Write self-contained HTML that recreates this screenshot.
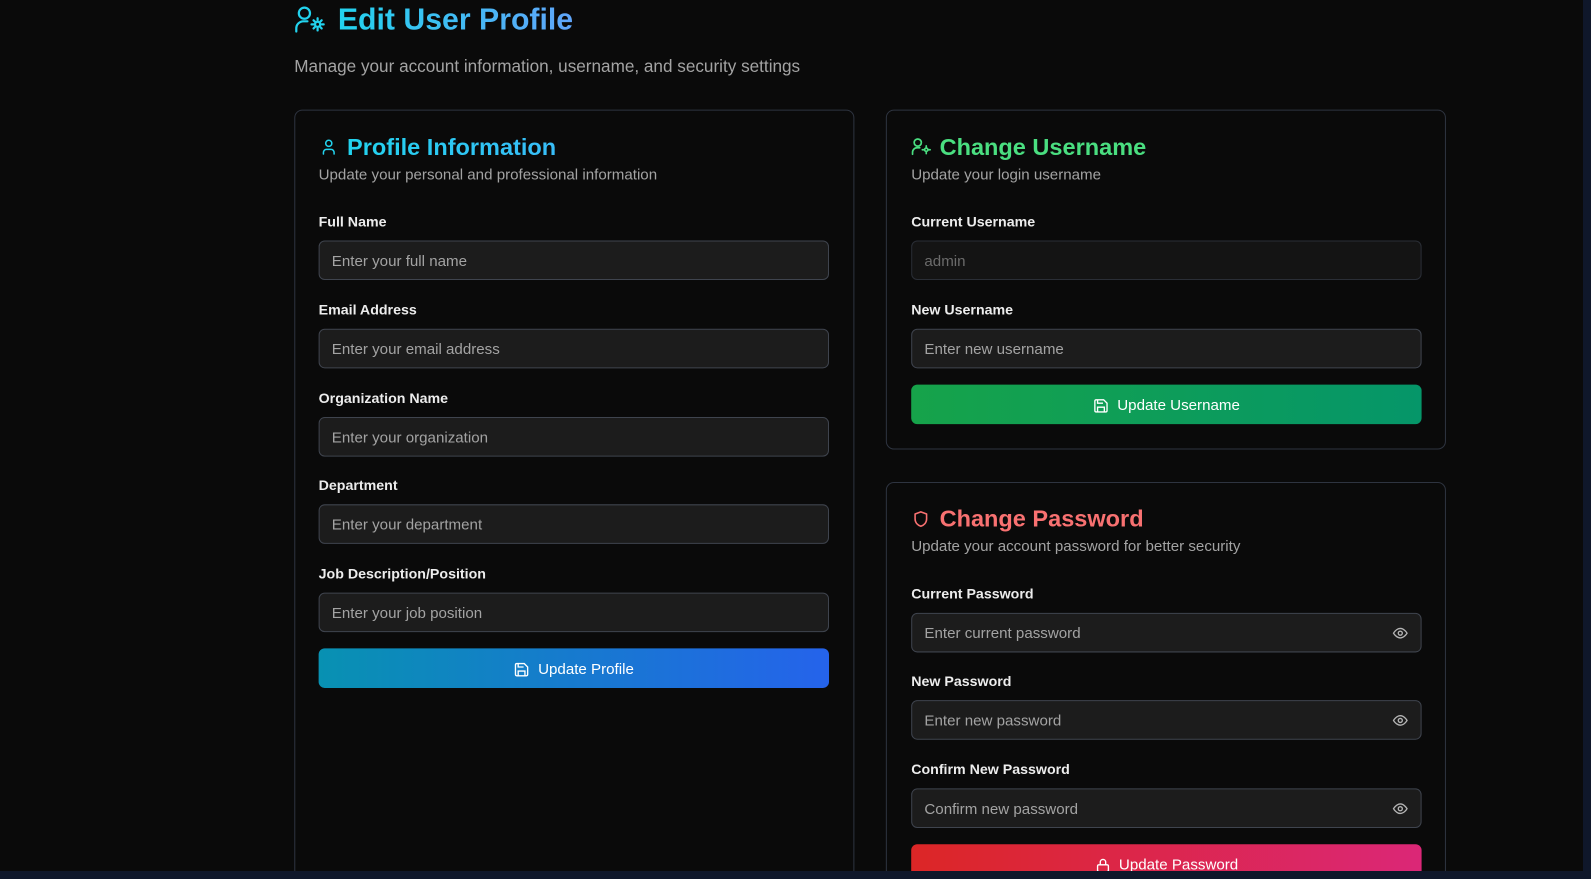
<!DOCTYPE html>
<html><head><meta charset="utf-8"><style>
*{box-sizing:border-box;margin:0;padding:0}
html,body{width:1591px;height:879px;overflow:hidden;background:#0f172a;font-family:"Liberation Sans",sans-serif}
#page{position:absolute;left:0;top:0;width:1583px;height:871px;background:#0a0a0a;overflow:hidden}
#wrap{position:absolute;left:0;top:0;width:1560px;height:900px;transform:scale(1.0147);transform-origin:0 0}
.abs{position:absolute}
.card{position:absolute;border:1px solid #2e3440;border-radius:8px;background:#0a0a0a}
.h1{left:333px;top:2px;font-size:29.8px;font-weight:bold;background:linear-gradient(90deg,#22d3ee,#60a5fa);-webkit-background-clip:text;color:transparent;line-height:36px}
.sub{color:#a3a3a3;font-size:14.9px}
.h2{font-size:23.2px;font-weight:bold;line-height:30px}
.lbl{position:absolute;color:#ededed;font-size:14px;font-weight:bold}
.inp{position:absolute;width:503px;height:39px;background:#1c1c1c;border:1px solid #3f444e;border-radius:6px;color:#a3a3a3;font-size:14.9px;line-height:40px;padding-left:12px}
.btn{position:absolute;width:503px;height:39px;border-radius:6px;color:#fff;font-size:14.9px;display:flex;align-items:center;justify-content:center;gap:8px;padding-top:2px}
.eye{position:absolute;right:11px;top:11px}
</style></head><body><div id="page"><div id="wrap">
<svg class="abs" style="left:290px;top:6px" width="31" height="28" viewBox="0 0 31 28" fill="none" stroke="#22d3ee" stroke-width="2.2" stroke-linecap="round"><circle cx="10" cy="7" r="5.5"/><path d="M2 25v-3a7 7 0 0 1 7-7h4"/><circle cx="23" cy="18" r="2.5"/><path d="M23 12v2M23 22v2M17 18h2M27 18h2M19 14l1.4 1.4M25.6 20.6l1.4 1.4M19 22l1.4-1.4M25.6 15.4l1.4-1.4"/></svg>
<div class="abs h1">Edit User Profile</div>
<div class="abs sub" style="left:290px;top:56px;font-size:16.9px">Manage your account information, username, and security settings</div>

<div class="card" style="left:290px;top:108px;width:552px;height:800px"></div>
<svg class="abs" style="left:315px;top:136px" width="18" height="18" viewBox="0 0 24 24" fill="none" stroke="#22d3ee" stroke-width="2" stroke-linecap="round"><circle cx="12" cy="7" r="4"/><path d="M5 21v-2a4 4 0 0 1 4-4h6a4 4 0 0 1 4 4v2"/></svg>
<div class="abs h2" style="left:342px;top:130px;background:linear-gradient(90deg,#22d3ee,#38bdf8);-webkit-background-clip:text;color:transparent">Profile Information</div>
<div class="abs sub" style="left:314px;top:165px">Update your personal and professional information</div>
<div class="lbl" style="left:314px;top:210px">Full Name</div><div class="inp" style="left:314px;top:237px">Enter your full name</div>
<div class="lbl" style="left:314px;top:297px">Email Address</div><div class="inp" style="left:314px;top:324px">Enter your email address</div>
<div class="lbl" style="left:314px;top:384px">Organization Name</div><div class="inp" style="left:314px;top:411px">Enter your organization</div>
<div class="lbl" style="left:314px;top:470px">Department</div><div class="inp" style="left:314px;top:497px">Enter your department</div>
<div class="lbl" style="left:314px;top:557px">Job Description/Position</div><div class="inp" style="left:314px;top:584px">Enter your job position</div>
<div class="btn" style="left:314px;top:639px;background:linear-gradient(90deg,#0891b2,#2563eb)"><svg width="16" height="16" viewBox="0 0 24 24" fill="none" stroke="#fff" stroke-width="2"><path d="M5 3h11l5 5v11a2 2 0 0 1-2 2H5a2 2 0 0 1-2-2V5a2 2 0 0 1 2-2z"/><path d="M7 21v-7h10v7M7 3v5h8"/></svg>Update Profile</div>

<div class="card" style="left:873px;top:108px;width:552px;height:335px"></div>
<svg class="abs" style="left:898px;top:136px" width="20" height="18" viewBox="0 0 31 28" fill="none" stroke="#4ade80" stroke-width="2.6" stroke-linecap="round"><circle cx="10" cy="7" r="5.5"/><path d="M2 25v-3a7 7 0 0 1 7-7h4"/><circle cx="23" cy="18" r="2.5"/><path d="M23 12v2M23 22v2M17 18h2M27 18h2"/></svg>
<div class="abs h2" style="left:926px;top:130px;color:#4ade80">Change Username</div>
<div class="abs sub" style="left:898px;top:165px">Update your login username</div>
<div class="lbl" style="left:898px;top:210px">Current Username</div><div class="inp" style="left:898px;top:237px;background:#141414;border-color:#2a2e36;color:#6b6b6b">admin</div>
<div class="lbl" style="left:898px;top:297px">New Username</div><div class="inp" style="left:898px;top:324px">Enter new username</div>
<div class="btn" style="left:898px;top:379px;background:linear-gradient(90deg,#16a34a,#059669)"><svg width="16" height="16" viewBox="0 0 24 24" fill="none" stroke="#fff" stroke-width="2"><path d="M5 3h11l5 5v11a2 2 0 0 1-2 2H5a2 2 0 0 1-2-2V5a2 2 0 0 1 2-2z"/><path d="M7 21v-7h10v7M7 3v5h8"/></svg>Update Username</div>

<div class="card" style="left:873px;top:475px;width:552px;height:500px"></div>
<svg class="abs" style="left:899px;top:502px" width="17" height="19" viewBox="0 0 24 24" fill="none" stroke="#f87171" stroke-width="2.2" stroke-linejoin="round"><path d="M12 2l8 3v7c0 5-3.5 8.5-8 10-4.5-1.5-8-5-8-10V5z"/></svg>
<div class="abs h2" style="left:926px;top:496px;color:#f87171">Change Password</div>
<div class="abs sub" style="left:898px;top:531px">Update your account password for better security</div>
<div class="lbl" style="left:898px;top:577px">Current Password</div><div class="inp" style="left:898px;top:604px">Enter current password<svg class="eye" width="18" height="16" viewBox="0 0 24 24" fill="none" stroke="#b5b5b5" stroke-width="2"><path d="M2 12s4-7 10-7 10 7 10 7-4 7-10 7S2 12 2 12z"/><circle cx="12" cy="12" r="3"/></svg></div>
<div class="lbl" style="left:898px;top:663px">New Password</div><div class="inp" style="left:898px;top:690px">Enter new password<svg class="eye" width="18" height="16" viewBox="0 0 24 24" fill="none" stroke="#b5b5b5" stroke-width="2"><path d="M2 12s4-7 10-7 10 7 10 7-4 7-10 7S2 12 2 12z"/><circle cx="12" cy="12" r="3"/></svg></div>
<div class="lbl" style="left:898px;top:750px">Confirm New Password</div><div class="inp" style="left:898px;top:777px">Confirm new password<svg class="eye" width="18" height="16" viewBox="0 0 24 24" fill="none" stroke="#b5b5b5" stroke-width="2"><path d="M2 12s4-7 10-7 10 7 10 7-4 7-10 7S2 12 2 12z"/><circle cx="12" cy="12" r="3"/></svg></div>
<div class="btn" style="left:898px;top:832px;background:linear-gradient(90deg,#dc2626,#db2777)"><svg width="16" height="16" viewBox="0 0 24 24" fill="none" stroke="#fff" stroke-width="2"><rect x="4" y="11" width="16" height="10" rx="2"/><path d="M8 11V7a4 4 0 0 1 8 0v4"/></svg>Update Password</div>
</div></div></body></html>
